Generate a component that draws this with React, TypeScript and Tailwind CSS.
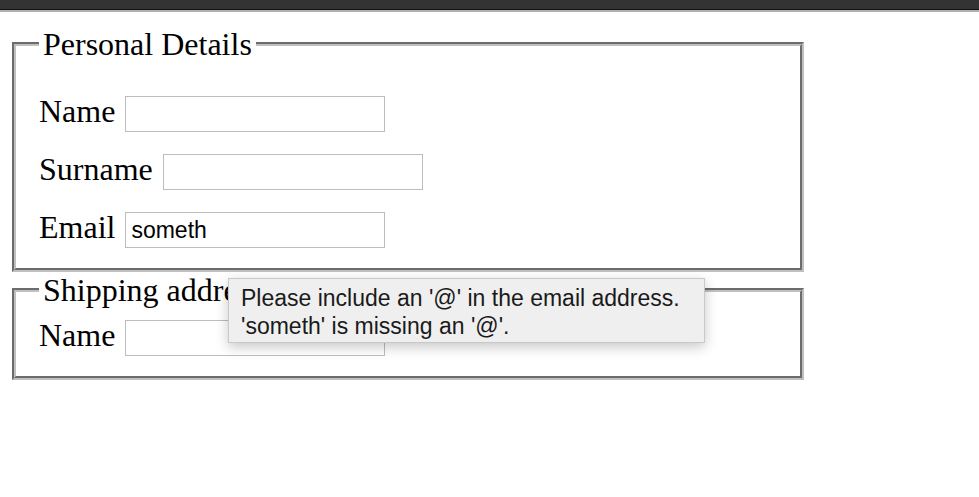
import React from 'react';

const serif = "font-['Liberation_Serif','Times_New_Roman',serif]";
const sans = "font-['Liberation_Sans',Arial,Helvetica,sans-serif]";

const Field: React.FC<{ label: string; value?: string }> = ({ label, value }) => (
  <div className="flex items-start gap-[10px]">
    <label className="text-[32px] leading-[31px] whitespace-nowrap">{label}</label>
    <input
      type="text"
      defaultValue={value}
      className={`w-[260px] h-[36px] border border-[#bdbdbd] bg-white px-[5px] text-[23px] text-black outline-none ${sans}`}
    />
  </div>
);

export default function App() {
  return (
    <div className={`relative min-h-screen bg-white text-black ${serif}`}>
      {/* window chrome strip */}
      <div className="h-[9px] bg-[#333333]" />
      <div className="h-px bg-[#141414]" />
      <div className="h-[2px] bg-[#b0b0b0]" />

      <form className="pl-3 pt-[14px]" onSubmit={e => e.preventDefault()}>
        <fieldset className="w-[792px] [border:4px_groove_#c0c0c0] px-[23px] pt-[34px] pb-[20px]">
          <legend className="px-[4px] text-[32px] leading-[36px]">Personal Details</legend>
          <div className="flex flex-col gap-[22px]">
            <Field label="Name" />
            <Field label="Surname" />
            <Field label="Email" value="someth" />
          </div>
        </fieldset>

        <fieldset className="w-[792px] [border:4px_groove_#c0c0c0] px-[23px] pt-[12px] pb-[20px]">
          <legend className="px-[4px] text-[32px] leading-[36px]">Shipping address</legend>
          <Field label="Name" />
        </fieldset>
      </form>

      {/* validation bubble */}
      <div
        className={`absolute left-[228px] top-[278px] w-[477px] border border-[#c9c9c9] bg-[#efefef] pl-[12px] pt-[5px] pb-[2px] text-[23px] leading-[28px] text-[#1a1a1a] shadow-[0_4px_12px_rgba(0,0,0,0.22)] ${sans}`}
      >
        <div className="whitespace-nowrap">Please include an '@' in the email address.</div>
        <div className="whitespace-nowrap">'someth' is missing an '@'.</div>
      </div>
    </div>
  );
}
